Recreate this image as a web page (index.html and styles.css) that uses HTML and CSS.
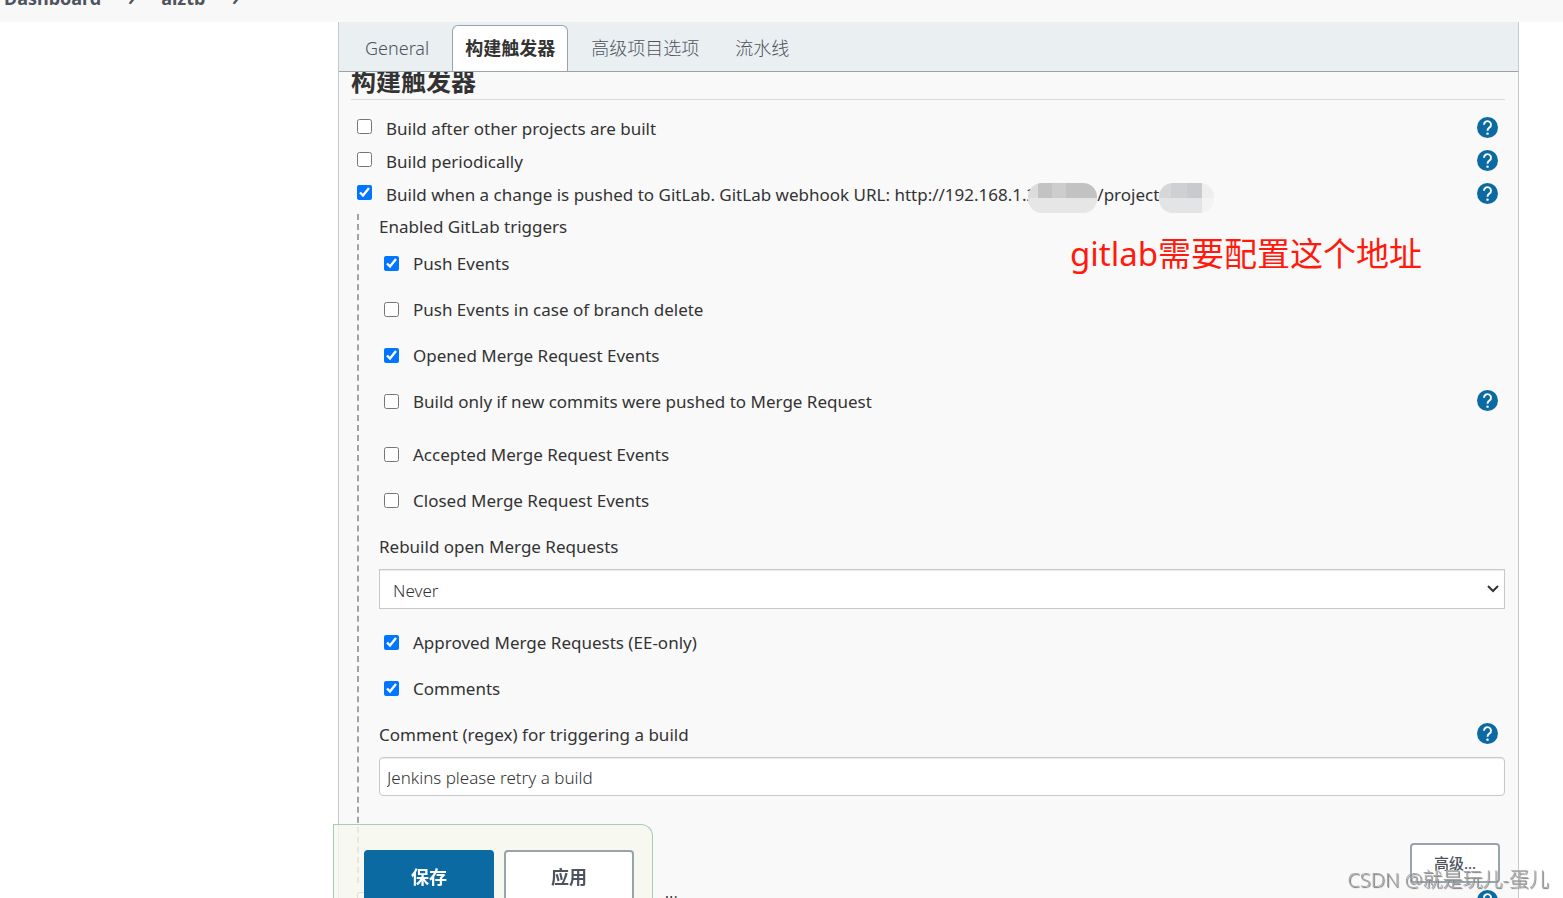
FILE: index.html
```html
<!DOCTYPE html>
<html lang="zh-CN">

<head>
    <meta charset="UTF-8">
    <meta name="viewport" content="width=device-width, initial-scale=1.0">
    <title>aiztb Config [Jenkins]</title>
    <link rel="stylesheet" href="styles.css">
</head>

<body>
    <svg class="sprite" aria-hidden="true">
        <symbol id="help" viewBox="0 0 24 24">
            <circle cx="12" cy="12" r="12" fill="#0b6aa2" />
            <path d="M8 8.800a4 4 0 1 1 6.300 3.200c-1.400 1-2.300 1.500-2.300 3.600" fill="none" stroke="#fff" stroke-width="2.200" />
            <circle cx="12" cy="19" r="1.400" fill="#fff" />
        </symbol>
    </svg>

    <nav class="breadcrumbs">
        <a href="#">Dashboard</a>
        <span class="arrow">›</span>
        <a href="#">aiztb</a>
        <span class="arrow">›</span>
    </nav>

    <main class="config">
        <nav class="tabs">
            <a class="tab" href="#">General</a>
            <a class="tab active" href="#">构建触发器</a>
            <a class="tab" href="#">高级项目选项</a>
            <a class="tab" href="#">流水线</a>
        </nav>

        <form class="section">
            <h2>构建触发器</h2>

            <div class="row">
                <input type="checkbox" id="afterOther">
                <label for="afterOther">Build after other projects are built</label>
                <button type="button" class="help" aria-label="Help"><svg><use href="#help" /></svg></button>
            </div>
            <div class="row">
                <input type="checkbox" id="periodic">
                <label for="periodic">Build periodically</label>
                <button type="button" class="help" aria-label="Help"><svg><use href="#help" /></svg></button>
            </div>
            <div class="row">
                <input type="checkbox" id="gitlab" checked>
                <label for="gitlab">Build when a change is pushed to GitLab. GitLab webhook URL: http://192.168.1.2<span class="mask host"></span>/project<span class="mask name"></span></label>
                <button type="button" class="help" aria-label="Help"><svg><use href="#help" /></svg></button>
            </div>

            <div class="nested">
                <div class="group-title">Enabled GitLab triggers</div>
                <div class="row">
                    <input type="checkbox" id="push" checked>
                    <label for="push">Push Events</label>
                </div>
                <div class="row">
                    <input type="checkbox" id="pushDelete">
                    <label for="pushDelete">Push Events in case of branch delete</label>
                </div>
                <div class="row">
                    <input type="checkbox" id="opened" checked>
                    <label for="opened">Opened Merge Request Events</label>
                </div>
                <div class="row with-help">
                    <input type="checkbox" id="newCommits">
                    <label for="newCommits">Build only if new commits were pushed to Merge Request</label>
                    <button type="button" class="help" aria-label="Help"><svg><use href="#help" /></svg></button>
                </div>
                <div class="row">
                    <input type="checkbox" id="accepted">
                    <label for="accepted">Accepted Merge Request Events</label>
                </div>
                <div class="row">
                    <input type="checkbox" id="closed">
                    <label for="closed">Closed Merge Request Events</label>
                </div>
                <div class="field">
                    <label for="rebuild">Rebuild open Merge Requests</label>
                </div>
                <select id="rebuild">
                    <option>Never</option>
                </select>
                <div class="row">
                    <input type="checkbox" id="approved" checked>
                    <label for="approved">Approved Merge Requests (EE-only)</label>
                </div>
                <div class="row">
                    <input type="checkbox" id="comments" checked>
                    <label for="comments">Comments</label>
                </div>
                <div class="field">
                    <label for="regex">Comment (regex) for triggering a build</label>
                    <button type="button" class="help" aria-label="Help"><svg><use href="#help" /></svg></button>
                </div>
                <input type="text" id="regex" value="Jenkins please retry a build">
                <div class="advanced">
                    <button type="button">高级...</button>
                </div>
            </div>

            <div class="row">
                <input type="checkbox" id="poll">
                <label for="poll">GitHub hook trigger for GITScm polling</label>
                <button type="button" class="help" aria-label="Help"><svg><use href="#help" /></svg></button>
            </div>
        </form>
        <p class="note">gitlab需要配置这个地址</p>
    </main>

    <div class="bottom-bar">
        <button type="button" class="save">保存</button>
        <button type="button" class="apply">应用</button>
    </div>
    <div class="watermark">CSDN @就是玩儿-蛋儿</div>
</body>

</html>
```
FILE: styles.css
```css
* {
    box-sizing: border-box;
}

body {
    margin: 0;
    height: 100vh;
    overflow: hidden;
    display: flex;
    flex-direction: column;
    font-family: "Noto Sans", "Noto Sans CJK SC", sans-serif;
    font-size: 17px;
    color: #333;
    background: #fff;
}

.sprite {
    position: absolute;
    width: 0;
    height: 0;
}

a {
    color: inherit;
    text-decoration: none;
}

.breadcrumbs {
    flex: none;
    display: flex;
    align-items: flex-end;
    height: 22px;
    padding: 0 4px 12px;
    overflow: hidden;
    background: #f8f8f8;
    color: #4d545d;
    font-size: 18px;
    font-weight: 700;
    line-height: 24px;
}

.breadcrumbs .arrow {
    width: 60px;
    text-align: center;
}

.config {
    position: relative;
    flex: 1;
    display: flex;
    flex-direction: column;
    min-height: 0;
    margin: 0 44px 0 338px;
    border: 1px solid #c6c9cb;
    border-width: 0 1px;
    background: #f9f9f9;
}

.tabs {
    flex: none;
    display: flex;
    gap: 10px;
    height: 50px;
    padding: 3px 13px 0;
    border-bottom: 1px solid #98a4ac;
    background: #eaeff2;
    color: #4d545d;
    font-size: 18px;
    font-weight: 300;
}

.tab {
    height: 46px;
    padding: 0 12px;
    border: 1px solid transparent;
    border-bottom: 0;
    border-radius: 6px 6px 0 0;
    line-height: 44px;
}

.tab.active {
    border-color: #98a4ac;
    background: #fff;
    color: #333;
    font-weight: 700;
}

.section {
    flex: 1;
    min-height: 0;
    overflow: hidden;
    padding: 0 13px 0 12px;
}

h2 {
    height: 28px;
    margin: 0 0 12px;
    border-bottom: 1px solid #d9dcde;
    font-size: 25px;
    line-height: 18px;
}

.row,
.field {
    display: flex;
    align-items: center;
    height: 33px;
}

.row {
    padding-left: 6px;
}

.row input {
    flex: none;
    width: 15px;
    height: 15px;
    margin: 0 14px 4px 0;
}

.help {
    width: 21px;
    height: 21px;
    margin: 0 7px 2px auto;
    padding: 0;
    border: 0;
    background: none;
}

.help svg {
    display: block;
    width: 21px;
    height: 21px;
}

/* pixelated cover over the private parts of the URL */
.mask {
    display: inline-block;
    height: 30px;
    margin: -4px 0 -8px;
    vertical-align: middle;
    border-radius: 14px;
}

.mask.host {
    width: 69px;
    margin-left: -8px;
    background: linear-gradient(transparent 50%, #e6e6e7 50%), linear-gradient(90deg, #dcdcdc 10px, #c4c2c3 10px 24px, #cbcdcf 24px 38px, #c2c2c3 38px);
}

.mask.name {
    width: 55px;
    background: linear-gradient(90deg, #e3e4e5 43px, #f3f3f3 43px) 0 100% / 100% 50% no-repeat, linear-gradient(90deg, #d6d7d8 12px, #cfd0d1 12px 28px, #c9cacd 28px 43px, #eee 43px);
}

.nested {
    margin: 3px 0 2px 6px;
    padding-left: 20px;
    border-left: 2px dashed #a3a3a3;
}

.nested .row {
    height: 46px;
    padding-left: 5px;
}

.nested .row input {
    margin-bottom: 0;
}

.nested .with-help {
    margin-bottom: 7px;
}

.group-title {
    height: 26px;
    line-height: 26px;
}

.field {
    height: 46px;
}

select,
input[type="text"] {
    display: block;
    width: 100%;
    border: 1px solid #c6c9cb;
    background: #fff;
    color: #333;
    font: inherit;
    font-weight: 300;
    box-shadow: inset 0 1px 1px rgba(0, 0, 0, 0.08);
}

select {
    appearance: none;
    height: 40px;
    margin-bottom: 10px;
    padding: 3px 30px 0 13px;
    background: #fff url("data:image/svg+xml,%3Csvg xmlns='http://www.w3.org/2000/svg' width='12' height='8'%3E%3Cpath d='M1 1l5 5 5-5' fill='none' stroke='%23333' stroke-width='2'/%3E%3C/svg%3E") no-repeat right 5px center;
}

input[type="text"] {
    height: 39px;
    padding: 2px 7px 0;
    border-radius: 4px;
}

.advanced {
    display: flex;
    justify-content: flex-end;
    padding: 47px 5px 0 0;
}

.advanced button {
    width: 90px;
    height: 40px;
    padding: 0 0 2px;
    border: 2px solid #98a4ac;
    border-radius: 4px;
    background: #fff;
    color: #4d545d;
    font: inherit;
    font-size: 15px;
    font-weight: 500;
}

.note {
    position: absolute;
    top: 207px;
    right: 96px;
    margin: 0;
    color: #ff1a0d;
    font-size: 33px;
    line-height: 50px;
}

.bottom-bar {
    position: fixed;
    left: 333px;
    bottom: 0;
    display: flex;
    gap: 10px;
    height: 74px;
    padding: 25px 18px 0 30px;
    overflow: hidden;
    border: 1px solid #a3cdb5;
    border-bottom: 0;
    border-radius: 0 12px 0 0;
    background: rgba(246, 248, 238, 0.8);
}

.bottom-bar button {
    flex: none;
    width: 130px;
    height: 52px;
    border: 2px solid #98a4ac;
    border-radius: 4px;
    background: #fff;
    color: #4d545d;
    font: inherit;
    font-size: 18px;
    font-weight: 700;
}

.bottom-bar .save {
    border-color: #0b6aa2;
    background: #0b6aa2;
    color: #fff;
}

.watermark {
    position: fixed;
    right: 14px;
    bottom: 4px;
    color: #a8a8a8;
    font-size: 20px;
    font-weight: 300;
    line-height: 28px;
    text-shadow: 1px 1px 1px #777;
}
```
